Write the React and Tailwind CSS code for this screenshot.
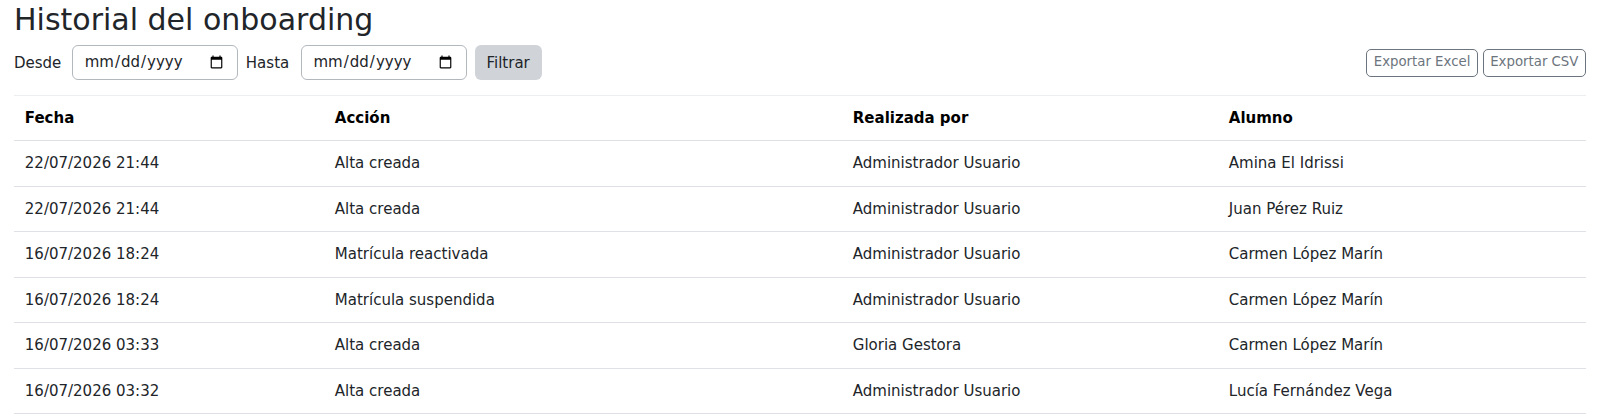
import React from 'react';

const rows = [
  { fecha: '22/07/2026 21:44', accion: 'Alta creada', por: 'Administrador Usuario', alumno: 'Amina El Idrissi' },
  { fecha: '22/07/2026 21:44', accion: 'Alta creada', por: 'Administrador Usuario', alumno: 'Juan Pérez Ruiz' },
  { fecha: '16/07/2026 18:24', accion: 'Matrícula reactivada', por: 'Administrador Usuario', alumno: 'Carmen López Marín' },
  { fecha: '16/07/2026 18:24', accion: 'Matrícula suspendida', por: 'Administrador Usuario', alumno: 'Carmen López Marín' },
  { fecha: '16/07/2026 03:33', accion: 'Alta creada', por: 'Gloria Gestora', alumno: 'Carmen López Marín' },
  { fecha: '16/07/2026 03:32', accion: 'Alta creada', por: 'Administrador Usuario', alumno: 'Lucía Fernández Vega' },
];

function DateField() {
  return (
    <input
      type="date"
      className="w-[166px] h-[35.4px] px-[10.8px] border border-[#b3b8bd] rounded-[6px] bg-white text-[15px] text-[#212529] outline-none"
    />
  );
}

export default function App() {
  return (
    <div className="min-h-screen bg-white px-[14px] pt-[2.4px] text-[15px] text-[#212529] font-['DejaVu_Sans',sans-serif]">
      <h1 className="text-[30px] leading-[1.2] font-normal mb-[6.6px]">Historial del onboarding</h1>

      <div className="flex items-center justify-between">
        <div className="flex items-center gap-2">
          <label className="mr-[2.5px] leading-[22px]">Desde</label>
          <DateField />
          <label className="mr-[3.5px] leading-[22px]">Hasta</label>
          <DateField />
          <button className="h-[35.4px] px-[11.8px] rounded-[6px] bg-[#d0d4d9] text-[#212529] leading-[22px]">
            Filtrar
          </button>
        </div>
        <div className="flex items-center gap-[4.7px]">
          <button className="px-[6.6px] py-[3.6px] border border-[#6c757d] rounded-[5px] text-[13.3px] leading-[18.9px] text-[#6c757d]">
            Exportar Excel
          </button>
          <button className="px-[6.6px] py-[3.6px] border border-[#6c757d] rounded-[5px] text-[13.3px] leading-[18.9px] text-[#6c757d]">
            Exportar CSV
          </button>
        </div>
      </div>

      <table className="w-full table-fixed border-collapse mt-[14.4px] border-t border-[#eceef0]">
        <colgroup>
          <col className="w-[310px]" />
          <col className="w-[518px]" />
          <col className="w-[376px]" />
          <col />
        </colgroup>
        <thead>
          <tr className="border-b border-[#dee2e6] text-black">
            <th className="text-left font-bold px-[10.8px] py-[11px] leading-[22.5px]">Fecha</th>
            <th className="text-left font-bold px-[10.8px] py-[11px] leading-[22.5px]">Acción</th>
            <th className="text-left font-bold px-[10.8px] py-[11px] leading-[22.5px]">Realizada por</th>
            <th className="text-left font-bold px-[10.8px] py-[11px] leading-[22.5px]">Alumno</th>
          </tr>
        </thead>
        <tbody>
          {rows.map((r, i) => (
            <tr key={i} className="border-b border-[#dee2e6]">
              <td className="px-[10.8px] py-[11px] leading-[22.5px]">{r.fecha}</td>
              <td className="px-[10.8px] py-[11px] leading-[22.5px]">{r.accion}</td>
              <td className="px-[10.8px] py-[11px] leading-[22.5px]">{r.por}</td>
              <td className="px-[10.8px] py-[11px] leading-[22.5px]">{r.alumno}</td>
            </tr>
          ))}
        </tbody>
      </table>
    </div>
  );
}
